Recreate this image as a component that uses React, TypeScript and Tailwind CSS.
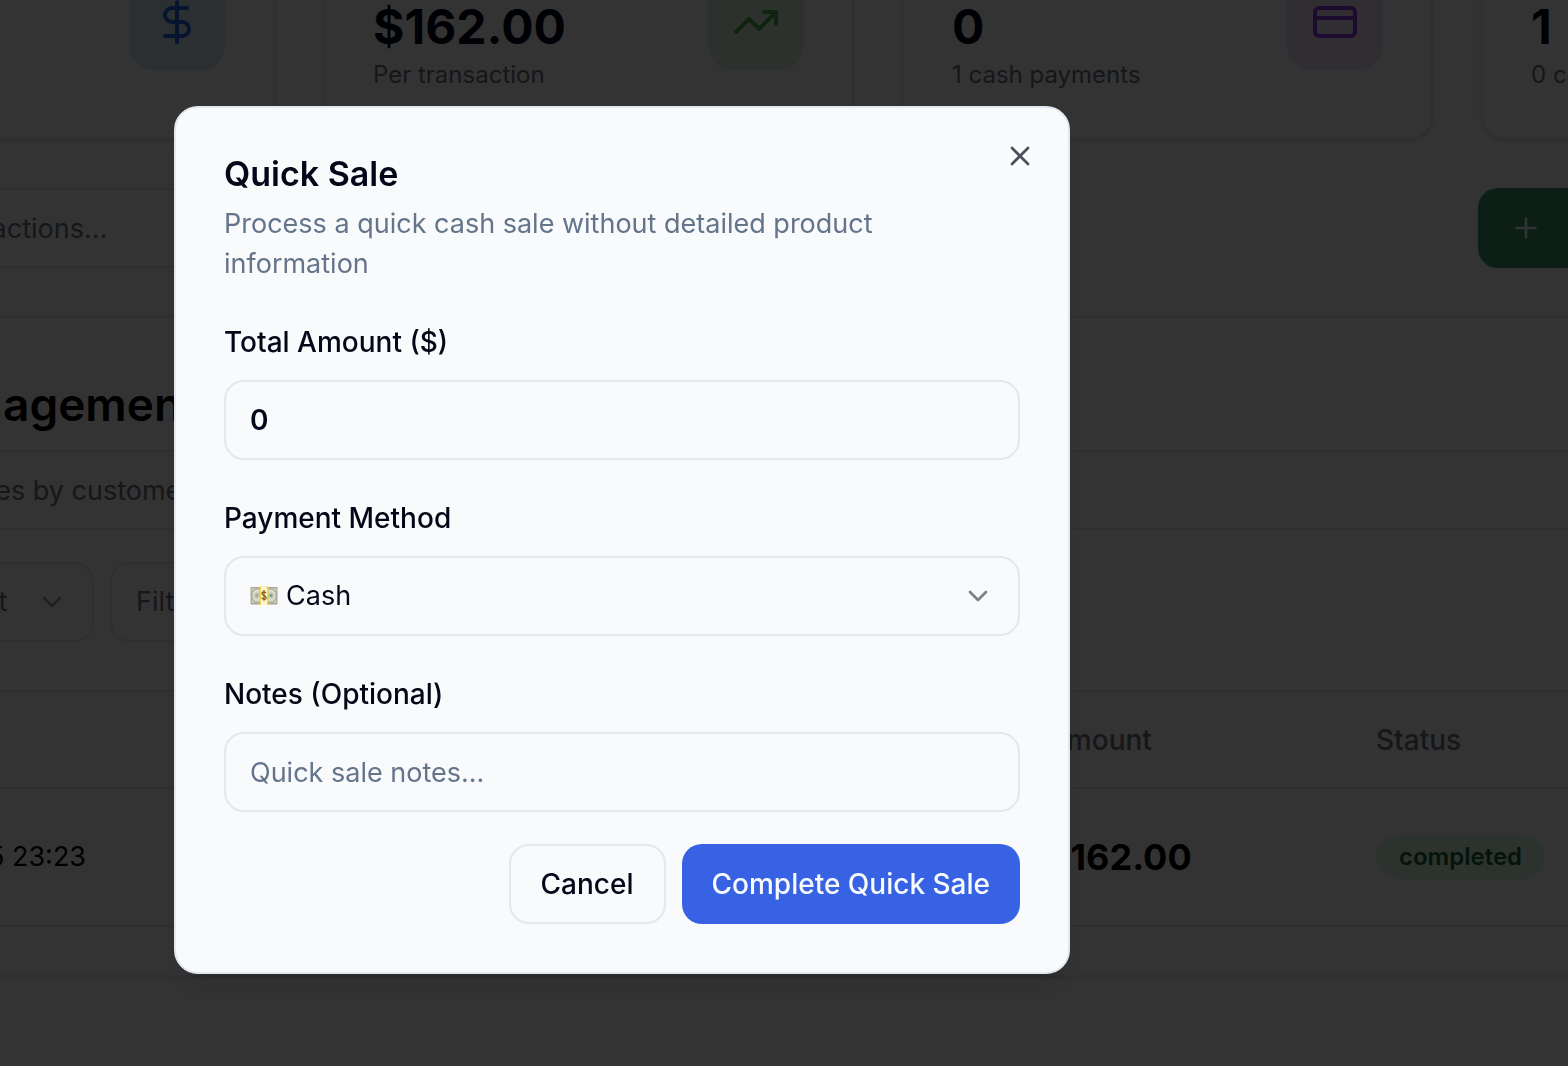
import { useState } from 'react'
import type { ReactNode } from 'react'
import { ChevronDown, CreditCard, DollarSign, Plus, TrendingUp, X } from 'lucide-react'

function StatCard({ value, note, icon }: { value?: string; note?: string; icon?: ReactNode }) {
  return (
    <section className="flex items-center justify-between rounded-3xl border-2 border-[#e2e8f0] bg-white px-12 pt-[47px] pb-[47px] shadow-sm">
      <div className="pt-[50px]">
        <p className="h-14 text-5xl leading-[48px] font-bold">{value}</p>
        <p className="h-8 text-2xl leading-8 text-[#6b7280]">{note}</p>
      </div>
      {icon}
    </section>
  )
}

function Banknote() {
  return (
    <svg viewBox="0 0 28 20" className="h-5 w-7" aria-hidden="true">
      <rect x="0.5" y="1" width="27" height="17.5" rx="1" fill="#a5a792" />
      <rect x="1.5" y="2" width="25" height="15" fill="#c9cab6" />
      <path d="M4.5 3h19a2.5 2.5 0 0 0 2.500 2.500v8a2.500 2.500 0 0 0-2.500 2.500h-19A2.500 2.500 0 0 0 2 13.500v-8A2.500 2.500 0 0 0 4.500 3z" fill="#dcdccb" stroke="#96988a" strokeWidth="0.8" />
      <circle cx="7" cy="9.500" r="3.200" fill="#c3c7b8" />
      <circle cx="7" cy="9.500" r="1.300" fill="#9ba395" />
      <circle cx="21" cy="9.500" r="3.200" fill="#c3c7b8" />
      <circle cx="21" cy="9.500" r="1.300" fill="#4fa184" />
      <rect x="9.500" y="0.500" width="9" height="18.500" fill="#f6cf45" />
      <rect x="11" y="0.500" width="6" height="18.500" fill="#fdf6d0" />
      <path d="M16 7.200c-.3-1-1.100-1.400-2-1.400-1.200 0-2 .7-2 1.700 0 2.500 4.200 1.400 4.200 3.900 0 1.100-.9 1.800-2.200 1.800-1.100 0-2-.5-2.200-1.600M14 4.300v10.400" fill="none" stroke="#7a5a10" strokeWidth="1.200" />
    </svg>
  )
}

function FilterSelect({ label, className, indent }: { label: string; className: string; indent: string }) {
  return (
    <div className={className}>
      <select
        aria-label={label}
        className={`h-20 w-full appearance-none rounded-[20px] border-2 border-[#e2e8f0] bg-white pr-16 text-[27px] text-[#6b7280] ${indent}`}
      >
        <option>{label}</option>
      </select>
      <ChevronDown className="pointer-events-none mr-[26px] size-8 self-center justify-self-end opacity-40" />
    </div>
  )
}

function SalesPage() {
  return (
    <main className="-mt-24 -ml-64 flex w-[calc(100%+700px)] shrink-0 flex-col gap-12">
      <div className="grid grid-cols-4 gap-12">
        <StatCard
          icon={
            <span className="flex size-24 items-center justify-center rounded-3xl bg-[#d7ebfa]">
              <DollarSign className="size-12 text-[#2563eb]" />
            </span>
          }
        />
        <StatCard
          value="$162.00"
          note="Per transaction"
          icon={
            <span className="flex size-24 items-center justify-center rounded-3xl bg-[#dcf5e3]">
              <TrendingUp className="size-12 text-[#4caf50]" />
            </span>
          }
        />
        <StatCard
          value="0"
          note="1 cash payments"
          icon={
            <span className="flex size-24 items-center justify-center rounded-3xl bg-[#f0e4fb]">
              <CreditCard className="size-12 text-[#9333ea]" />
            </span>
          }
        />
        <StatCard value="1" note="0 card payments" />
      </div>

      <div className="flex justify-between">
        <input
          type="search"
          aria-label="Search transactions"
          placeholder="Search transactions..."
          className="h-20 w-[1000px] rounded-[20px] border-2 border-[#e2e8f0] bg-white pl-[84px] text-[27px] placeholder:text-[#6b7280]"
        />
        <button type="button" aria-label="New sale" className="flex h-20 w-[534px] items-center rounded-[20px] bg-[#41966e] px-8 text-white">
          <Plus className="size-8" />
        </button>
      </div>

      <section className="rounded-3xl border-2 border-[#e2e8f0] bg-white p-12 shadow-sm">
        <h1 className="mb-2 pl-[112px] text-[46px] leading-[76px] font-semibold text-black">Management</h1>
        <input
          type="search"
          aria-label="Search sales"
          placeholder="Search sales by customer..."
          className="mb-8 h-20 w-full rounded-[20px] border-2 border-[#e2e8f0] bg-white pl-[66px] text-[27px] placeholder:text-[#6b7280]"
        />
        <div className="mb-12 flex gap-4">
          <FilterSelect label="Filter by client" className="grid w-[300px] *:col-start-1 *:row-start-1" indent="pl-8" />
          <FilterSelect label="Filter by status" className="grid w-[360px] *:col-start-1 *:row-start-1" indent="pl-6" />
        </div>
        <table className="w-full table-fixed border-t-2 border-[#e2e8f0] text-left text-black">
          <thead>
            <tr className="h-[97px] border-b-2 border-[#e2e8f0] text-[28px] text-[#6b7280]">
              <th className="w-[1221px] px-8 font-medium" aria-label="Date"></th>
              <th className="w-[329px] px-8 font-medium">Amount</th>
              <th className="px-8 font-medium">Status</th>
            </tr>
          </thead>
          <tbody>
            <tr className="h-[138px] border-b-2 border-[#e2e8f0]">
              <td className="pl-[144px] text-[27px]">2025 23:23</td>
              <td className="px-8 text-4xl font-bold">$162.00</td>
              <td className="px-8">
                <span className="inline-block rounded-full bg-[#dcfce7] px-[23px] py-1.5 align-middle text-2xl leading-8 font-semibold text-[#166534]">
                  completed
                </span>
              </td>
            </tr>
          </tbody>
        </table>
      </section>
    </main>
  )
}

const fieldClass =
  'h-20 w-full rounded-[20px] border-2 border-[#e2e8f0] bg-[#f8fafc] px-6 placeholder:text-[#64748b]'

function Field({ id, label, children }: { id: string; label: string; children: ReactNode }) {
  return (
    <div className="flex flex-col gap-4">
      <label htmlFor={id} className="pt-1 text-[28px] leading-[44px] font-medium">
        {label}
      </label>
      {children}
    </div>
  )
}

function QuickSaleDialog() {
  const [amount, setAmount] = useState('0')
  const [notes, setNotes] = useState('')
  return (
    <div className="fixed inset-0 bg-black/80 pt-[106px] pl-[174px]">
      <div
        role="dialog"
        aria-labelledby="quick-sale-title"
        className="relative flex max-w-[896px] flex-col gap-8 rounded-3xl border-2 border-[#e2e8f0] bg-[#f8fafc] p-12 shadow-[0_20px_30px_-6px_rgb(0_0_0/0.1),0_8px_12px_-8px_rgb(0_0_0/0.1)]"
      >
        <header className="flex flex-col gap-3">
          <h2 id="quick-sale-title" className="text-[34px] leading-9 font-semibold">
            Quick Sale
          </h2>
          <p className="text-[27px] leading-10 text-[#64748b]">
            Process a quick cash sale without detailed product information
          </p>
        </header>
        <Field id="amount" label="Total Amount ($)">
          <input
            id="amount"
            type="text"
            inputMode="decimal"
            value={amount}
            onChange={(e) => setAmount(e.target.value)}
            className={`${fieldClass} text-[28px] font-semibold`}
          />
        </Field>
        <Field id="method" label="Payment Method">
          <div className="grid items-center *:col-start-1 *:row-start-1">
            <select id="method" className="h-20 w-full appearance-none rounded-[20px] border-2 border-[#e2e8f0] bg-[#f8fafc] pr-16 pl-[60px] text-[27px]">
              <option>Cash</option>
            </select>
            <span className="pointer-events-none ml-[26px] justify-self-start">
              <Banknote />
            </span>
            <ChevronDown className="pointer-events-none mr-[26px] size-8 justify-self-end opacity-50" />
          </div>
        </Field>
        <Field id="notes" label="Notes (Optional)">
          <input
            id="notes"
            type="text"
            placeholder="Quick sale notes..."
            value={notes}
            onChange={(e) => setNotes(e.target.value)}
            className={`${fieldClass} text-[27px]`}
          />
        </Field>
        <footer className="flex justify-end gap-4 text-[28px] leading-10 font-medium">
          <button type="button" className="h-20 rounded-[20px] border-2 border-[#e2e8f0] px-[30px]">
            Cancel
          </button>
          <button type="button" className="h-20 rounded-[20px] bg-[#3762e3] px-[30px] text-[#f8fafc]">
            Complete Quick Sale
          </button>
        </footer>
        <button type="button" aria-label="Close" className="absolute top-8 right-8 opacity-70">
          <X className="size-8" />
        </button>
      </div>
    </div>
  )
}

export default function App() {
  return (
    <div className="flex min-h-screen items-start overflow-hidden bg-[#fcfcfc] font-['Inter',sans-serif] text-[#020817]">
      <SalesPage />
      <QuickSaleDialog />
    </div>
  )
}
